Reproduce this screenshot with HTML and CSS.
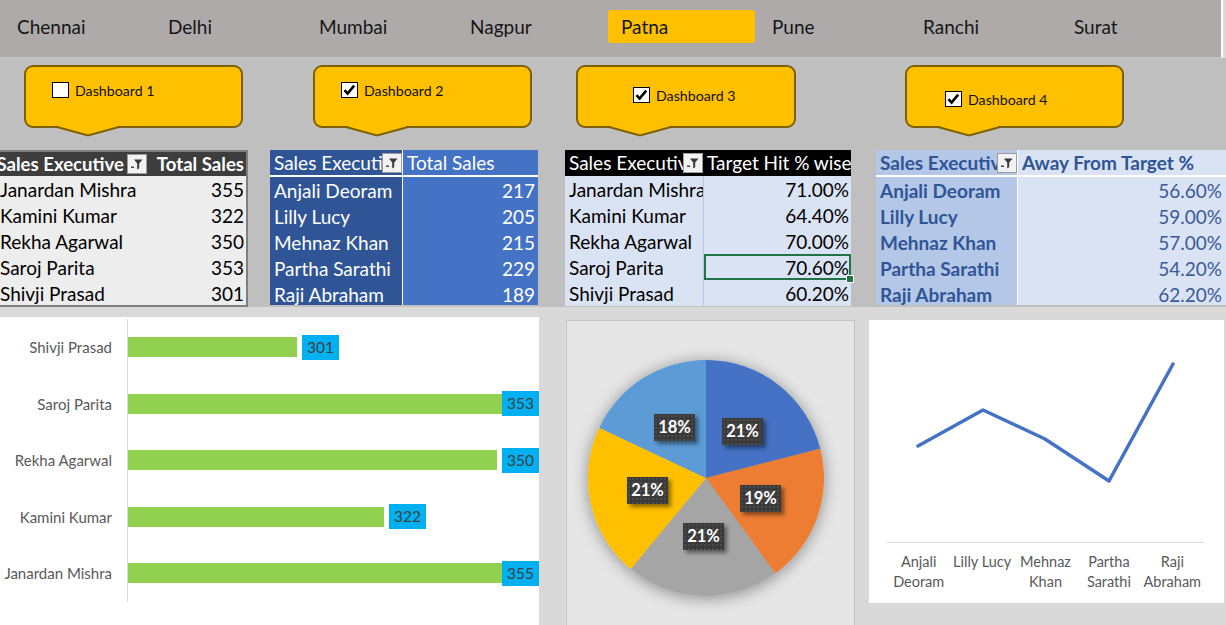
FILE: index.html
```html
<!DOCTYPE html>
<html>
<head>
<meta charset="utf-8">
<link rel="stylesheet" href="styles.css">
</head>
<body>
<div class="slicer">
  <div class="slicer-item">Chennai</div>
  <div class="slicer-item">Delhi</div>
  <div class="slicer-item">Mumbai</div>
  <div class="slicer-item">Nagpur</div>
  <div class="slicer-item is-selected">Patna</div>
  <div class="slicer-item">Pune</div>
  <div class="slicer-item">Ranchi</div>
  <div class="slicer-item">Surat</div>
</div>

<div class="band">
  <div class="callouts">
    <div class="callout c1">
      <span class="cb"></span><span class="cb-label">Dashboard 1</span>
      <svg class="tail" width="62" height="11" viewBox="0 0 62 11"><polygon points="2,0 60,0 60,2 31,9 2,2" fill="#ffc000"/><polyline points="0,1 31,9.5 62,1" fill="none" stroke="#7f6000" stroke-width="2"/></svg>
    </div>
    <div class="callout c2">
      <span class="cb"><svg width="13" height="12" viewBox="0 0 13 12"><path d="M1.5 6.2 L4.6 9.6 L11.2 1.6" fill="none" stroke="#000" stroke-width="2.6"/></svg></span><span class="cb-label">Dashboard 2</span>
      <svg class="tail" width="62" height="11" viewBox="0 0 62 11"><polygon points="2,0 60,0 60,2 31,9 2,2" fill="#ffc000"/><polyline points="0,1 31,9.5 62,1" fill="none" stroke="#7f6000" stroke-width="2"/></svg>
    </div>
    <div class="callout c3">
      <span class="cb"><svg width="13" height="12" viewBox="0 0 13 12"><path d="M1.5 6.2 L4.6 9.6 L11.2 1.6" fill="none" stroke="#000" stroke-width="2.6"/></svg></span><span class="cb-label">Dashboard 3</span>
      <svg class="tail" width="62" height="11" viewBox="0 0 62 11"><polygon points="2,0 60,0 60,2 31,9 2,2" fill="#ffc000"/><polyline points="0,1 31,9.5 62,1" fill="none" stroke="#7f6000" stroke-width="2"/></svg>
    </div>
    <div class="callout c4">
      <span class="cb"><svg width="13" height="12" viewBox="0 0 13 12"><path d="M1.5 6.2 L4.6 9.6 L11.2 1.6" fill="none" stroke="#000" stroke-width="2.6"/></svg></span><span class="cb-label">Dashboard 4</span>
      <svg class="tail" width="62" height="11" viewBox="0 0 62 11"><polygon points="2,0 60,0 60,2 31,9 2,2" fill="#ffc000"/><polyline points="0,1 31,9.5 62,1" fill="none" stroke="#7f6000" stroke-width="2"/></svg>
    </div>
  </div>

  <div class="tables">
    <div class="tbl t1">
      <div class="cell th th-name"><span class="th-txt th-end"><span>Sales Executive</span></span><span class="filter"><svg width="18" height="18" viewBox="0 0 18 18"><path d="M6 4.5h8.5l-3.3 4v4.8l-2 1.2v-6z" fill="#3a3a3a"/><rect x="3" y="11.5" width="3" height="1.4" fill="#3a3a3a"/></svg></span></div>
      <div class="cell th num">Total Sales</div>
      <div class="cell">Janardan Mishra</div><div class="cell num">355</div>
      <div class="cell">Kamini Kumar</div><div class="cell num">322</div>
      <div class="cell">Rekha Agarwal</div><div class="cell num">350</div>
      <div class="cell">Saroj Parita</div><div class="cell num">353</div>
      <div class="cell">Shivji Prasad</div><div class="cell num">301</div>
    </div>

    <div class="tbl t2">
      <div class="cell th th-name"><span class="th-txt">Sales Executive</span><span class="filter"><svg width="18" height="18" viewBox="0 0 18 18"><path d="M6 4.5h8.5l-3.3 4v4.8l-2 1.2v-6z" fill="#3a3a3a"/><rect x="3" y="11.5" width="3" height="1.4" fill="#3a3a3a"/></svg></span></div>
      <div class="cell th val">Total Sales</div>
      <div class="cell name">Anjali Deoram</div><div class="cell val num">217</div>
      <div class="cell name">Lilly Lucy</div><div class="cell val num">205</div>
      <div class="cell name">Mehnaz Khan</div><div class="cell val num">215</div>
      <div class="cell name">Partha Sarathi</div><div class="cell val num">229</div>
      <div class="cell name">Raji Abraham</div><div class="cell val num">189</div>
    </div>

    <div class="tbl t3">
      <div class="cell th th-name"><span class="th-txt">Sales Executive</span><span class="filter"><svg width="18" height="18" viewBox="0 0 18 18"><path d="M6 4.5h8.5l-3.3 4v4.8l-2 1.2v-6z" fill="#3a3a3a"/><rect x="3" y="11.5" width="3" height="1.4" fill="#3a3a3a"/></svg></span></div>
      <div class="cell th">Target Hit % wise</div>
      <div class="cell">Janardan Mishra</div><div class="cell val num">71.00%</div>
      <div class="cell">Kamini Kumar</div><div class="cell val num">64.40%</div>
      <div class="cell">Rekha Agarwal</div><div class="cell val num">70.00%</div>
      <div class="cell">Saroj Parita</div><div class="cell val num is-active">70.60%</div>
      <div class="cell">Shivji Prasad</div><div class="cell val num">60.20%</div>
    </div>

    <div class="tbl t4">
      <div class="cell th th-name"><span class="th-txt">Sales Executive</span><span class="filter"><svg width="18" height="18" viewBox="0 0 18 18"><path d="M6 4.5h8.5l-3.3 4v4.8l-2 1.2v-6z" fill="#3a3a3a"/><rect x="3" y="11.5" width="3" height="1.4" fill="#3a3a3a"/></svg></span></div>
      <div class="cell th val">Away From Target %</div>
      <div class="cell name">Anjali Deoram</div><div class="cell val num">56.60%</div>
      <div class="cell name">Lilly Lucy</div><div class="cell val num">59.00%</div>
      <div class="cell name">Mehnaz Khan</div><div class="cell val num">57.00%</div>
      <div class="cell name">Partha Sarathi</div><div class="cell val num">54.20%</div>
      <div class="cell name">Raji Abraham</div><div class="cell val num">62.20%</div>
    </div>
  </div>
</div>

<div class="bottom">
  <div class="barpanel">
    <div class="bar-row"><div class="bar-name">Shivji Prasad</div><div class="bar-plot"><div class="bar" style="width:169px"></div><div class="bar-val">301</div></div></div>
    <div class="bar-row"><div class="bar-name">Saroj Parita</div><div class="bar-plot"><div class="bar" style="width:384px"></div><div class="bar-val inside">353</div></div></div>
    <div class="bar-row"><div class="bar-name">Rekha Agarwal</div><div class="bar-plot"><div class="bar" style="width:371px"></div><div class="bar-val">350</div></div></div>
    <div class="bar-row"><div class="bar-name">Kamini Kumar</div><div class="bar-plot"><div class="bar" style="width:256px"></div><div class="bar-val">322</div></div></div>
    <div class="bar-row"><div class="bar-name">Janardan Mishra</div><div class="bar-plot"><div class="bar" style="width:393px"></div><div class="bar-val inside">355</div></div></div>
  </div>

  <div class="piepanel">
    <svg class="pie" width="287" height="305" viewBox="0 0 287 305">
      <defs>
        <filter id="halo" x="-30%" y="-30%" width="160%" height="160%">
          <feDropShadow dx="0" dy="2" stdDeviation="8" flood-color="#000" flood-opacity="0.4"/>
        </filter>
      </defs>
      <g filter="url(#halo)">
        <path d="M139,157 L139,39 A118,118 0 0,1 253.3,127.65 Z" fill="#4472c4"/>
        <path d="M139,157 L253.3,127.65 A118,118 0 0,1 208.36,252.46 Z" fill="#ed7d31"/>
        <path d="M139,157 L208.36,252.46 A118,118 0 0,1 63.79,247.92 Z" fill="#a5a5a5"/>
        <path d="M139,157 L63.79,247.92 A118,118 0 0,1 32.23,106.76 Z" fill="#ffc000"/>
        <path d="M139,157 L32.23,106.76 A118,118 0 0,1 139,39 Z" fill="#5b9bd5"/>
      </g>
    </svg>
    <div class="pie-label pl-blue">21%</div>
    <div class="pie-label pl-lblue">18%</div>
    <div class="pie-label pl-yellow">21%</div>
    <div class="pie-label pl-orange">19%</div>
    <div class="pie-label pl-gray">21%</div>
  </div>

  <div class="linepanel">
    <svg class="line" width="355" height="223" viewBox="0 0 355 223">
      <line x1="18" y1="222.5" x2="335" y2="222.5" stroke="#d9d9d9" stroke-width="1"/>
      <polyline points="49,126 114,90 176,119 240,161 304,44" fill="none" stroke="#4472c4" stroke-width="3.5" stroke-linejoin="round" stroke-linecap="round"/>
    </svg>
    <div class="line-labels">
      <div>Anjali<br>Deoram</div>
      <div>Lilly Lucy</div>
      <div>Mehnaz<br>Khan</div>
      <div>Partha<br>Sarathi</div>
      <div>Raji<br>Abraham</div>
    </div>
  </div>
</div>
</body>
</html>
```
FILE: styles.css
```css
* { box-sizing: border-box; margin: 0; padding: 0; }
html, body { width: 1226px; height: 625px; overflow: hidden; }
body { background: #d9d9d9; font-family: "Lato", "Carlito", sans-serif; color: #000; }

/* slicer */
.slicer {
  display: flex; gap: 4px; align-items: flex-start;
  width: 1223px; height: 58px; padding: 10px 0 0 4px;
  background: #aeaaaa; border-right: 2px solid #fff; border-bottom: 1px solid #c6c4c4;
}
.slicer-item {
  flex: none; width: 147px; height: 33px; line-height: 33px;
  padding-left: 13px; font-size: 19px; color: #161616; border-radius: 3px;
}
.slicer-item.is-selected { background: #ffc000; }

/* band */
.band { height: 249px; background: #bfbfbf; }
.callouts { display: flex; align-items: flex-start; height: 92px; padding-top: 7px; }
.callout {
  position: relative; flex: none; display: flex; align-items: flex-start;
  width: 219px; height: 63px; background: #ffc000;
  border: 2px solid #7f6000; border-radius: 9px; font-size: 14.2px; color: #111;
}
.c1 { margin-left: 24px; padding: 15px 0 0 26px; }
.c2 { margin-left: 70px; padding: 15px 0 0 26px; }
.c3 { margin-left: 44px; width: 220px; padding: 20px 0 0 55px; }
.c4 { margin-left: 109px; padding: 24px 0 0 38px; }
.cb {
  flex: none; display: flex; align-items: center; justify-content: center;
  width: 17px; height: 16px; background: #fff; border: 1px solid #000; margin-right: 6px;
}
.cb-label { line-height: 17px; }
.tail { position: absolute; left: 31px; top: 59px; overflow: visible; }

/* tables */
.tables { display: flex; align-items: flex-start; height: 157px; }
.tbl { display: grid; flex: none; overflow: hidden; font-size: 19px; }
.cell { line-height: 27px; white-space: nowrap; overflow: hidden; padding: 0 4px; }
.th { line-height: 26px; }
.num { text-align: right; }
.th-name { display: flex; align-items: center; padding-right: 0; }
.th-txt { flex: 1; min-width: 0; overflow: hidden; white-space: nowrap; }
.th-end { display: flex; justify-content: flex-end; }
.th-end span { flex: none; }
.filter {
  flex: none; display: flex; align-items: center; justify-content: center;
  width: 20px; height: 20px; background: #f2f2f2; border: 1px solid #9c9c9c;
}

.t1 {
  margin-left: -2px; width: 250px; height: 157px;
  border: 2px solid #7f7f7f; background: #ededed;
  grid-template-columns: 150px 96px; grid-template-rows: 24px repeat(5, 26px);
}
.t1 .cell { padding: 0 2px 0 0; }
.t1 .th { background: #3d3d3d; color: #fff; font-weight: 700; font-size: 18.6px; line-height: 24px; }
.t1 .th-name { padding-right: 3px; }
.t1 .th-txt { margin-right: 3px; }

.t2 {
  margin-left: 22px; width: 268px; height: 155px; color: #fff;
  grid-template-columns: 132px 136px; grid-template-rows: 27px repeat(5, 26px);
}
.t2 .th { background: #2f5597; border-bottom: 2px solid #fff; line-height: 25px; }
.t2 .name { background: #2f5597; }
.t2 .val { background: #4472c4; border-left: 1px solid #fff; padding-right: 3px; }

.t3 {
  margin-left: 27px; width: 286px; height: 156px; overflow: visible;
  background: #dae3f3; grid-template-columns: 138px 148px; grid-template-rows: 26px repeat(5, 26px);
}
.t3 .th { background: #000; color: #fff; }
.t3 .th-name { padding-right: 0; }
.t3 .val { border-left: 1px solid #b4c7e7; padding-right: 2px; }
.t3 .is-active { position: relative; overflow: visible; box-shadow: inset 0 0 0 2px #217346; }
.t3 .is-active::after {
  content: ""; position: absolute; right: -3px; bottom: -3px; width: 6px; height: 6px;
  background: #217346; border: 1px solid #fff;
}

.t4 {
  margin-left: 25px; width: 350px; height: 155px; color: #2f5597;
  grid-template-columns: 141px 209px; grid-template-rows: 27px repeat(5, 26px);
}
.t4 .th { font-weight: 700; border-bottom: 2px solid #fff; line-height: 25px; }
.t4 .th-name, .t4 .name { background: #b4c7e7; }
.t4 .name { font-weight: 700; }
.t4 .val { background: #dae3f3; border-left: 1px solid #fff; padding-right: 4px; }
.t4 .th.val { text-align: left; }
.t4 .val.num { color: #3b5a9a; }

/* bottom */
.bottom { display: flex; align-items: flex-start; height: 318px; padding-top: 10px; }
.barpanel {
  flex: none; width: 539px; height: 308px; background: #fff; overflow: hidden;
  display: grid; grid-template-rows: repeat(5, 56.5px); padding-top: 2px; align-content: start;
}
.bar-row { display: flex; align-items: stretch; min-width: 0; }
.bar-name {
  flex: none; width: 127px; padding-right: 15px;
  font-size: 15px; color: #595959; display: flex; align-items: center; justify-content: flex-end;
  white-space: nowrap;
}
.bar-plot { flex: 1; min-width: 0; display: flex; align-items: center; border-left: 1px solid #d9d9d9; }
.bar { flex: 0 1 auto; min-width: 0; height: 20px; background: #92d050; }
.bar-val {
  flex: none; height: 25px; line-height: 25px; padding: 0 5px; margin-left: 5px;
  background: #00b0f0; color: #404040; font-size: 15.5px;
}
.bar-val.inside { margin-left: 0; }

.piepanel {
  position: relative; flex: none; width: 289px; height: 310px;
  margin: 3px 0 0 27px; background: #e6e6e6; border: 1px solid #c4c4c4;
}
.pie { display: block; }
.pie-label {
  position: absolute; width: 41px; height: 27px; line-height: 27px; text-align: center;
  font-size: 16.5px; font-weight: 700; color: #fff;
  background-color: #3a3a3a;
  background-image: radial-gradient(rgba(255,255,255,0.09) 0.8px, transparent 1px);
  background-size: 4px 4px;
  box-shadow: 3px 3px 4px rgba(0,0,0,0.45);
}
.pl-blue { left: 155px; top: 97px; }
.pl-lblue { left: 87px; top: 93px; }
.pl-yellow { left: 60px; top: 156px; }
.pl-orange { left: 173px; top: 164px; }
.pl-gray { left: 116px; top: 202px; }

.linepanel {
  flex: none; width: 355px; height: 283px; margin: 3px 0 0 14px; background: #fff;
}
.line { display: block; }
.line-labels {
  display: grid; grid-template-columns: repeat(5, 1fr); width: 317px; margin: 9px 0 0 18px;
  font-size: 14.5px; line-height: 20px; color: #595959; text-align: center; white-space: nowrap;
}
```
